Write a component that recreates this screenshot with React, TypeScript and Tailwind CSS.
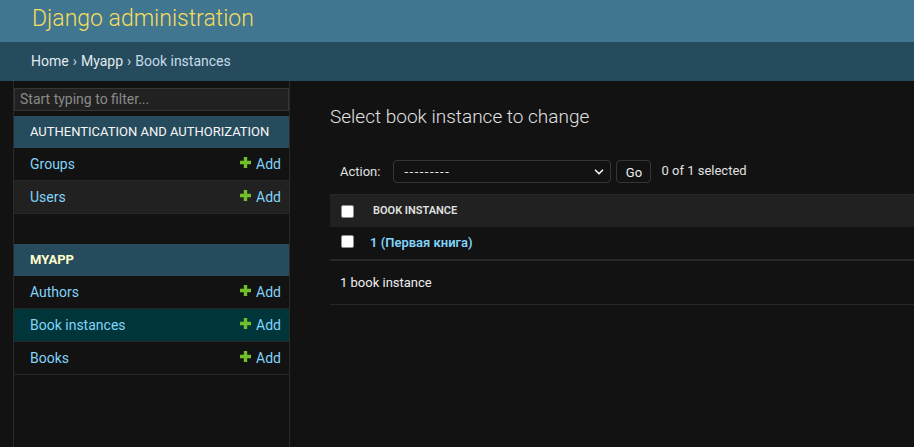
import { ChevronDown } from "lucide-react";

const font = { fontFamily: 'Roboto, "Noto Sans", sans-serif' };

function Plus() {
  return (
    <svg width="11" height="11" viewBox="0 0 11 11" className="mr-[5px] -mt-[3px]">
      <path d="M3.8 0h3.4v3.8H11v3.4H7.2V11H3.8V7.2H0V3.8h3.8z" fill="#70bf2b" />
    </svg>
  );
}

function NavRow({ name, className = "" }: { name: string; className?: string }) {
  return (
    <div
      className={`flex items-center justify-between h-[33px] border-b border-[#272727] pl-4 pr-2 text-[14px] ${className}`}
    >
      <a href="#" className="text-[#81d4fa]">{name}</a>
      <a href="#" className="flex items-center text-[#81d4fa]">
        <Plus />
        Add
      </a>
    </div>
  );
}

function Checkbox() {
  return <div className="w-[13px] h-[13px] bg-white rounded-[2px] border border-[#8f8f8f]" />;
}

export default function App() {
  return (
    <div className="h-[447px] overflow-hidden bg-[#121212] text-[#eeeeee] flex flex-col" style={font}>
      <header className="h-[42px] bg-[#417690] flex items-center px-8 shrink-0">
        <h1 className="text-[23px] font-light text-[#f5dd5d] leading-none -mt-[5px]">Django administration</h1>
      </header>
      <div className="h-[39px] bg-[#264b5d] flex items-center px-[31px] text-[14px] text-[#c4dce8] shrink-0">
        <a href="#" className="text-[#e0eaf0]">Home</a>
        <span className="mx-1">›</span>
        <a href="#" className="text-[#e0eaf0]">Myapp</a>
        <span className="mx-1">›</span>
        <span>Book instances</span>
      </div>
      <div className="flex flex-1 min-h-0">
        <div className="w-[14px] border-r border-[#2a2a2a] shrink-0" />
        <nav className="w-[276px] border-r border-[#2a2a2a] shrink-0 pt-[6px]">
          <input
            placeholder="Start typing to filter..."
            className="w-full h-[23px] bg-[#212121] border border-[#353535] px-[5px] text-[14px] text-[#eeeeee] placeholder-[#8a8a8a] outline-none"
          />
          <div className="mt-[5px]">
            <div className="h-[32px] bg-[#264b5d] flex items-center pl-4 text-[13px] text-[#f7f7f7] uppercase">
              Authentication and Authorization
            </div>
            <NavRow name="Groups" />
            <NavRow name="Users" className="bg-[#212121]" />
          </div>
          <div className="mt-[30px]">
            <div className="h-[32px] bg-[#264b5d] flex items-center pl-4 text-[13px] font-bold text-[#ffffcc] uppercase">
              Myapp
            </div>
            <NavRow name="Authors" />
            <NavRow name="Book instances" className="bg-[#00363a]" />
            <NavRow name="Books" />
          </div>
        </nav>
        <main className="flex-1 min-w-0 pl-10 pt-[22px]">
          <h1 className="text-[19px] font-light text-[#e0e0e0] leading-[28px]">Select book instance to change</h1>
          <div className="mt-[29px] flex items-center h-[23px] pl-[10px] text-[13px]">
            <span className="mr-[13px] text-[#e0e0e0]">Action:</span>
            <div className="w-[218px] h-[23px] border border-[#353535] rounded-[4px] flex items-center justify-between pl-[10px] pr-[4px]">
              <span className="tracking-[1.5px]">---------</span>
              <ChevronDown size={14} strokeWidth={3} className="text-[#eeeeee]" />
            </div>
            <div className="ml-[5px] w-[35px] h-[23px] border border-[#353535] rounded-[4px] flex items-center justify-center pt-[2px]">
              Go
            </div>
            <span className="ml-[10px] -mt-[2px] text-[#e0e0e0]">0 of 1 selected</span>
          </div>
          <div className="mt-[11px] w-[700px]">
            <div className="h-[33px] bg-[#212121] border-t border-[#272727] flex items-center pl-[11px]">
              <Checkbox />
              <span className="ml-[19px] text-[11px] font-semibold text-[#e0e0e0] uppercase">Book instance</span>
            </div>
            <div className="h-[34px] border-b-2 border-[#272727] flex items-center pl-[11px]">
              <div className="-mt-[4px]"><Checkbox /></div>
              <a href="#" className="ml-[16px] text-[13px] font-semibold text-[#81d4fa]">1 (Первая книга)</a>
            </div>
            <div className="h-[44px] border-b border-[#272727] flex items-center pl-[10px] text-[13px] text-[#eeeeee]">
              1 book instance
            </div>
          </div>
        </main>
      </div>
    </div>
  );
}
